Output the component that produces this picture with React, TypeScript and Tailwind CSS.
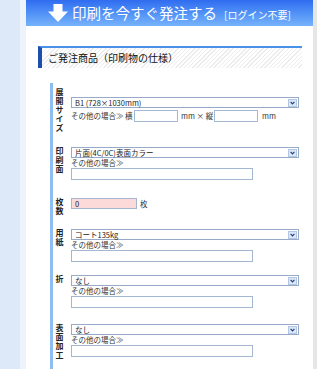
const FONT = "font-['Noto_Sans_CJK_JP','Noto_Sans',sans-serif]";

const Chevron = () => (
  <span className="flex h-[8px] w-[9px] items-center justify-center border border-[#b3c6e2] bg-[#dbe7f8]">
    <svg width="5" height="4" viewBox="0 0 5 4">
      <path d="M0.6 0.8 L2.5 2.8 L4.4 0.8" fill="none" stroke="#1f3c7a" strokeWidth="1.2" />
    </svg>
  </span>
);

const Select: React.FC<{ value: string }> = ({ value }) => (
  <div className="flex h-[11px] w-[228px] items-center justify-between border border-[#97abc9] bg-white pl-[3px] pr-[1px]">
    <span className="text-[7.5px] leading-none text-[#222]">{value}</span>
    <Chevron />
  </div>
);

const Box: React.FC<{ className?: string }> = ({ className = "" }) => (
  <input readOnly className={`h-[12px] border border-[#a3b6d2] bg-white ${className}`} />
);

const Other = () => (
  <div className="h-[9px] text-[7.5px] leading-[9px] text-[#333]">その他の場合≫</div>
);

// vertical label, one char per line
const Row: React.FC<{ label: string; className?: string; children: React.ReactNode }> = ({
  label,
  className = "",
  children,
}) => (
  <div className={`flex items-start ${className}`}>
    <div className="ml-[2px] mr-[8px] flex w-[8px] justify-center">
      <span className="text-[8px] font-bold leading-[8px] tracking-[1px] text-[#222] [text-orientation:upright] [writing-mode:vertical-rl]">
        {label}
      </span>
    </div>
    <div className="flex flex-col">{children}</div>
  </div>
);

export default function App() {
  return (
    <div className={`flex h-[369px] w-[320px] overflow-hidden bg-white ${FONT}`}>
      <div className="w-[20px] bg-[#dde9f9]" />
      <div className="w-[6px] bg-[#edf3fb]" />

      <div className="flex w-[287px] flex-col bg-white">
        {/* header */}
        <div className="flex h-[26px] items-center bg-gradient-to-b from-[#2f6cf0] to-[#76b3fb] pl-[22px] text-white">
          <svg width="20" height="18" viewBox="0 0 20 18">
            <rect x="5.5" y="0" width="9" height="8" fill="#fff" />
            <path d="M0 7.5 L20 7.5 L10 18 Z" fill="#fff" />
          </svg>
          <span className="ml-[4px] text-[14.5px] leading-none">印刷を今すぐ発注する</span>
          <span className="ml-[7px] mt-[3px] text-[10px] leading-none">[ログイン不要]</span>
        </div>

        {/* section heading */}
        <div className="ml-[12px] mt-[20px] flex h-[22px] w-[264px] items-center border-l-[4px] border-t-2 border-l-[#1c4eae] border-t-[#4a92e8] bg-[repeating-linear-gradient(135deg,#ececec_0px,#ececec_1px,#ffffff_1px,#ffffff_3px)] pl-[6px]">
          <span className="text-[10px] leading-none text-[#111]">ご発注商品（印刷物の仕様）</span>
        </div>

        {/* form */}
        <div className="ml-[24px] mt-[15px] flex-1 border-l-[3px] border-[#8dbdf3] pt-[5px]">
          <Row label="展開サイズ">
            <div className="pt-[9px]">
              <Select value="B1 (728×1030mm)" />
              <div className="mt-[2px] flex h-[12px] items-center text-[7.5px] leading-none text-[#333]">
                <span className="w-[54px]">その他の場合≫</span>
                <span className="w-[9px]">横</span>
                <Box className="w-[44px]" />
                <span className="ml-[3px] w-[33px]">mm × 縦</span>
                <Box className="w-[44px]" />
                <span className="ml-[4px]">mm</span>
              </div>
            </div>
          </Row>

          <Row label="印刷面" className="mt-[14px]">
            <Select value="片面(4C/0C)表面カラー" />
            <Other />
            <Box className="mt-[1px] w-[182px]" />
          </Row>

          <Row label="枚数" className="mt-[18px]">
            <div className="flex items-center">
              <div className="flex h-[11px] w-[66px] items-center border border-[#a3b6d2] bg-[#fcdada] pl-[3px] text-[7.5px] leading-none text-[#222]">
                0
              </div>
              <span className="ml-[3px] text-[7.5px] leading-none text-[#333]">枚</span>
            </div>
          </Row>

          <Row label="用紙" className="mt-[13px]">
            <Select value="コート135kg" />
            <Other />
            <Box className="mt-[1px] w-[182px]" />
          </Row>

          <Row label="折" className="mt-[13px]">
            <Select value="なし" />
            <Other />
            <Box className="mt-[1px] w-[182px]" />
          </Row>

          <Row label="表面加工" className="mt-[16px]">
            <Select value="なし" />
            <Other />
            <Box className="mt-[1px] w-[182px]" />
          </Row>
        </div>
      </div>

      <div className="w-[4px] bg-[#e6e6e6]" />
      <div className="w-[3px] bg-white" />
    </div>
  );
}
